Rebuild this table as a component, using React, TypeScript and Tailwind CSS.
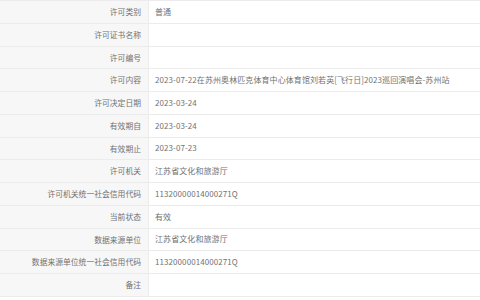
import React from "react";

const rows: [string, string][] = [
  ["许可类别", "普通"],
  ["许可证书名称", ""],
  ["许可编号", ""],
  ["许可内容", "2023-07-22在苏州奥林匹克体育中心体育馆刘若英[飞行日]2023巡回演唱会-苏州站"],
  ["许可决定日期", "2023-03-24"],
  ["有效期自", "2023-03-24"],
  ["有效期止", "2023-07-23"],
  ["许可机关", "江苏省文化和旅游厅"],
  ["许可机关统一社会信用代码", "11320000014000271Q"],
  ["当前状态", "有效"],
  ["数据来源单位", "江苏省文化和旅游厅"],
  ["数据来源单位统一社会信用代码", "11320000014000271Q"],
  ["备注", ""],
];

export default function App() {
  return (
    <div
      className="w-[480px] h-[300px] bg-white overflow-hidden text-[#727272]"
      style={{ fontFamily: '"Microsoft YaHei", "Noto Sans CJK SC", sans-serif' }}
    >
      <div className="flex flex-col border-t border-[#ececec]">
        {rows.map(([label, value]) => (
          <div key={label} className="flex h-[22.75px] border-b border-[#ececec]">
            <div className="w-[149px] shrink-0 bg-[#f7f7f7] border-r border-[#ececec] flex items-center justify-end pr-[7px] whitespace-nowrap text-[7.8px]">
              {label}
            </div>
            <div className="flex-1 flex items-center pl-[6px] whitespace-nowrap text-[8px] tracking-[0.08px]">{value}</div>
          </div>
        ))}
      </div>
    </div>
  );
}
